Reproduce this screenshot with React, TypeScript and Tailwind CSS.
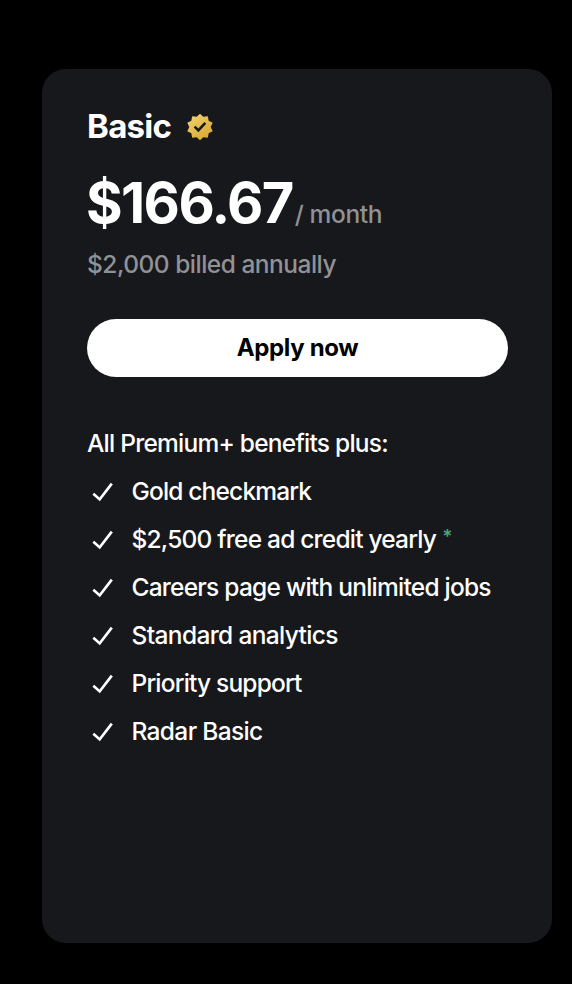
const benefits = [
  { label: "Gold checkmark", tracking: "tracking-[-0.83px]" },
  { label: "$2,500 free ad credit yearly", tracking: "tracking-[-0.79px]", note: true },
  { label: "Careers page with unlimited jobs", tracking: "tracking-[-0.76px]" },
  { label: "Standard analytics", tracking: "tracking-[-0.64px]" },
  { label: "Priority support", tracking: "tracking-[-0.82px]" },
  { label: "Radar Basic", tracking: "tracking-[-0.65px]" },
];

function GoldBadge() {
  return (
    <svg viewBox="0 0 22 22" className="size-7" aria-hidden="true">
      <defs>
        <linearGradient id="gold" x1="4" y1="2" x2="18" y2="20" gradientUnits="userSpaceOnUse">
          <stop offset="0" stopColor="#f0d070" />
          <stop offset="0.5" stopColor="#e4bb4c" />
          <stop offset="1" stopColor="#d8a836" />
        </linearGradient>
      </defs>
      <path
        fill="url(#gold)"
        d="M13.596 3.011L11 .5 8.404 3.011l-3.576-.506-.624 3.558-3.19 1.692L2.6 11l-1.586 3.245 3.19 1.692.624 3.558 3.576-.506L11 21.5l2.596-2.511 3.576.506.624-3.558 3.19-1.692L19.4 11l1.586-3.245-3.19-1.692-.624-3.558-3.576.506z"
      />
      <path fill="#17181c" d="M6 11.39l3.74 3.74 6.2-6.77L14.47 7l-4.8 5.23-2.26-2.26L6 11.39z" />
    </svg>
  );
}

function Check() {
  return (
    <svg viewBox="0 0 24 24" className="mt-px size-8 shrink-0" fill="currentColor" aria-hidden="true">
      <path d="M9.64 18.952l-5.55-4.861 1.317-1.504 3.951 3.459 8.459-10.948L19.4 6.32 9.64 18.952z" />
    </svg>
  );
}

export default function App() {
  return (
    <main className="h-[984px] w-[572px] bg-black pt-[69px] pl-[42px] font-['Inter',sans-serif] text-white">
      <section className="flex h-[874px] w-[510px] flex-col rounded-3xl bg-[#17181c] pt-10 pr-11 pl-[45px]">
        <header className="flex h-9 items-center gap-[15px]">
          <h2 className="-mt-0.5 text-[33px] leading-9 font-bold tracking-[-0.7px]">Basic</h2>
          <GoldBadge />
        </header>
        <div className="mt-[21px] flex h-[75px] items-baseline leading-[75px]">
          <span className="-ml-px text-[56px] font-bold tracking-[-1.6px]">$166.67</span>
          <span className="ml-0.5 text-[24.5px] font-[450] tracking-[-0.35px] whitespace-nowrap text-[#919295]">/ month</span>
        </div>
        <p className="mt-[7px] h-8 text-[24.5px] leading-8 font-[450] tracking-[-0.5px] whitespace-nowrap text-[#919295]">
          $2,000 billed annually
        </p>
        <button className="mt-[39px] h-[58px] w-[421px] rounded-full bg-white text-[24px] font-bold tracking-[-0.35px] text-black">
          Apply now
        </button>
        <h3 className="mt-[50px] h-8 text-[24.5px] leading-8 font-[450] tracking-[-0.76px] whitespace-nowrap">
          All Premium+ benefits plus:
        </h3>
        <ul className="mt-4 flex flex-col gap-4">
          {benefits.map((b) => (
            <li
              key={b.label}
              className="-ml-[0.5px] flex h-8 items-center gap-[13px] text-[24.5px] leading-8 font-[450] whitespace-nowrap"
            >
              <Check />
              <span className="flex">
                <span className={b.tracking}>{b.label}</span>
                {b.note && <span className="ml-1.5 text-[19px] leading-7 font-semibold text-[#4ba678]">*</span>}
              </span>
            </li>
          ))}
        </ul>
      </section>
    </main>
  );
}
